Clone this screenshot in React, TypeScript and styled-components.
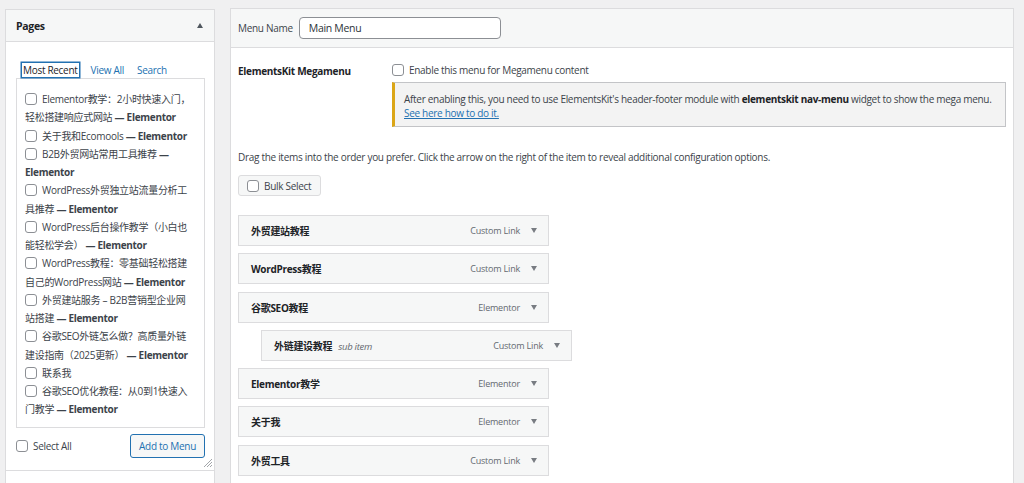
import * as React from 'react';
import styled, { createGlobalStyle } from 'styled-components';

type Page = { title: string; state?: string };
type MenuItem = { title: string; type: string; sub?: boolean };

const pages: Page[] = [
  { title: 'Elementor教学：2小时快速入门，轻松搭建响应式网站', state: 'Elementor' },
  { title: '关于我和Ecomools', state: 'Elementor' },
  { title: 'B2B外贸网站常用工具推荐', state: 'Elementor' },
  { title: 'WordPress外贸独立站流量分析工具推荐', state: 'Elementor' },
  { title: 'WordPress后台操作教学（小白也能轻松学会）', state: 'Elementor' },
  { title: 'WordPress教程：零基础轻松搭建自己的WordPress网站', state: 'Elementor' },
  { title: '外贸建站服务 – B2B营销型企业网站搭建', state: 'Elementor' },
  { title: '谷歌SEO外链怎么做？高质量外链建设指南（2025更新）', state: 'Elementor' },
  { title: '联系我' },
  { title: '谷歌SEO优化教程：从0到1快速入门教学', state: 'Elementor' },
];

const menuItems: MenuItem[] = [
  { title: '外贸建站教程', type: 'Custom Link' },
  { title: 'WordPress教程', type: 'Custom Link' },
  { title: '谷歌SEO教程', type: 'Elementor' },
  { title: '外链建设教程', type: 'Custom Link', sub: true },
  { title: 'Elementor教学', type: 'Elementor' },
  { title: '关于我', type: 'Elementor' },
  { title: '外贸工具', type: 'Custom Link' },
];

const GlobalStyle = createGlobalStyle`
  * { box-sizing: border-box; }
  html, body {
    margin: 0;
    padding: 0;
    background: #f0f0f1;
  }
  body {
    font-family: "Open Sans", "Noto Sans CJK SC", sans-serif;
    font-size: 10px;
    letter-spacing: -0.3px;
    color: #3c434a;
  }
`;

const Layout = styled.div`
  display: flex;
  align-items: flex-start;
  gap: 15px;
  height: 483px;
  overflow: hidden;
  padding: 8px 10px 0 5px;
`;

/* ---------- left column ---------- */

const SideColumn = styled.div`
  width: 210px;
  flex: none;
  margin-top: 1px;
  background: #fff;
  border: 1px solid #dcdcde;
  border-bottom: none;
`;

const SectionHeader = styled.div`
  display: flex;
  align-items: center;
  justify-content: space-between;
  height: 32px;
  padding: 0 11px 0 10px;
  background: #f6f7f7;
  border-bottom: 1px solid #dcdcde;
`;

const SectionTitle = styled.h3`
  margin: 0;
  font-size: 10.5px;
  font-weight: 700;
  color: #1d2327;
`;

const Caret = styled.span<{ $up?: boolean }>`
  width: 0;
  height: 0;
  border-left: 3px solid transparent;
  border-right: 3px solid transparent;
  ${p => (p.$up ? 'border-bottom: 5px solid #50575e;' : 'border-top: 5px solid #787c82;')}
`;

const SectionBody = styled.div`
  position: relative;
  padding: 20px 10px 12px 10px;
`;

const TabList = styled.div`
  display: flex;
  align-items: flex-end;
  gap: 9px;
  padding-left: 5px;
  height: 16px;
`;

const Tab = styled.span<{ $active?: boolean }>`
  display: block;
  padding: 0 1px;
  line-height: 14px;
  font-size: 10px;
  color: ${p => (p.$active ? '#1d2327' : '#2271b1')};
  border: 1px solid ${p => (p.$active ? '#2271b1' : 'transparent')};
  box-shadow: ${p => (p.$active ? '0 0 0 0.5px #2271b1' : 'none')};
  background: #fff;
`;

const TabPanel = styled.div`
  height: 350px;
  width: 189px;
  border: 1px solid #dcdcde;
  padding: 11px 9px 0 8px;
  overflow: hidden;
`;

const PageRow = styled.div`
  font-size: 10px;
  line-height: 18.25px;
  color: #3c434a;
`;

const Check = styled.span`
  display: inline-block;
  width: 12px;
  height: 12px;
  border: 1px solid #8c8f94;
  border-radius: 3px;
  background: #fff;
  vertical-align: -2px;
  margin-right: 5px;
  flex: none;
`;

const PostState = styled.strong`
  font-weight: 700;
  color: #3c434a;
`;

const SubmitRow = styled.div`
  display: flex;
  align-items: center;
  justify-content: space-between;
  margin-top: 6px;
  width: 189px;
`;

const CheckLabel = styled.label`
  display: flex;
  align-items: center;
  font-size: 10px;
  color: #3c434a;
`;

const SecondaryButton = styled.button`
  height: 24px;
  padding: 0 8px;
  font-family: inherit;
  font-size: 10px;
  letter-spacing: -0.3px;
  color: #2271b1;
  background: #f6f7f7;
  border: 1px solid #2271b1;
  border-radius: 3px;
`;

const ResizeGrip = styled.svg`
  position: absolute;
  right: 1px;
  bottom: 2px;
`;

const NextSection = styled.div`
  height: 20px;
  border-top: 1px solid #dcdcde;
`;

/* ---------- right column ---------- */

const EditorPanel = styled.div`
  flex: 1;
  min-width: 0;
  background: #fff;
  border: 1px solid #dcdcde;
  border-bottom: none;
  height: 480px;
`;

const EditorHeader = styled.div`
  display: flex;
  align-items: center;
  gap: 6px;
  height: 39px;
  padding: 0 7px;
  background: #f6f7f7;
  border-bottom: 1px solid #dcdcde;
`;

const FieldLabel = styled.label`
  font-size: 10px;
  color: #3c434a;
`;

const TextInput = styled.input`
  width: 202px;
  height: 22px;
  padding: 0 9px;
  font-family: inherit;
  font-size: 10.5px;
  letter-spacing: -0.3px;
  color: #2c3338;
  background: #fff;
  border: 1px solid #8c8f94;
  border-radius: 4px;
  outline: none;
`;

const EditorBody = styled.div`
  padding: 15px 7px 0 7px;
`;

const SettingRow = styled.div`
  display: grid;
  grid-template-columns: 154px 1fr;
`;

const SettingName = styled.div`
  font-size: 10px;
  font-weight: 700;
  color: #1d2327;
  line-height: 14px;
  padding-top: 1px;
`;

const SettingControl = styled.div`
  display: flex;
  flex-direction: column;
  gap: 5px;
`;

const Notice = styled.div`
  background: #f3f3f3;
  border: 1px solid #c3c4c7;
  border-left: 3px solid #dba617;
  padding: 9px 4px 6px 9px;
  font-size: 10px;
  line-height: 14px;
  color: #3c434a;

  strong {
    font-weight: 700;
    color: #1d2327;
  }

  a {
    color: #2271b1;
    text-decoration: underline;
  }
`;

const Instructions = styled.p`
  margin: 23px 0 0;
  font-size: 10px;
  line-height: 14px;
  color: #3c434a;
`;

const BulkButton = styled.div`
  display: inline-flex;
  align-items: center;
  height: 21px;
  margin-top: 11px;
  padding: 0 9px 0 8px;
  font-size: 10px;
  color: #3c434a;
  background: #f6f7f7;
  border: 1px solid #dcdcde;
  border-radius: 3px;
`;

const MenuList = styled.div`
  display: flex;
  flex-direction: column;
  gap: 7.3px;
  margin-top: 19px;
`;

const MenuRow = styled.div<{ $sub?: boolean }>`
  display: flex;
  align-items: center;
  justify-content: space-between;
  width: 311px;
  height: 31px;
  margin-left: ${p => (p.$sub ? '23px' : '0')};
  padding: 0 11px 0 12px;
  background: #f6f7f7;
  border: 1px solid #dcdcde;
`;

const MenuTitle = styled.span`
  font-size: 10px;
  font-weight: 700;
  color: #1d2327;
`;

const SubLabel = styled.em`
  margin-left: 6px;
  font-size: 9.5px;
  font-weight: 400;
  color: #646970;
`;

const MenuMeta = styled.span`
  display: flex;
  align-items: center;
  gap: 11px;
  font-size: 9px;
  letter-spacing: -0.2px;
  color: #646970;
`;

const App = () => {
  return (
    <>
      <GlobalStyle />
      <Layout>
        <SideColumn>
          <SectionHeader>
            <SectionTitle>Pages</SectionTitle>
            <Caret $up />
          </SectionHeader>
          <SectionBody>
            <TabList>
              <Tab $active>Most Recent</Tab>
              <Tab>View All</Tab>
              <Tab>Search</Tab>
            </TabList>
            <TabPanel>
              {pages.map(page => (
                <PageRow key={page.title}>
                  <Check />
                  {page.title}
                  {page.state && <PostState> — {page.state}</PostState>}
                </PageRow>
              ))}
            </TabPanel>
            <SubmitRow>
              <CheckLabel>
                <Check />
                Select All
              </CheckLabel>
              <SecondaryButton>Add to Menu</SecondaryButton>
            </SubmitRow>
            <ResizeGrip width="10" height="10" viewBox="0 0 10 10">
              <path d="M9 1 L1 9 M9 4 L4 9 M9 7 L7 9" stroke="#8c8f94" strokeWidth="0.8" />
            </ResizeGrip>
          </SectionBody>
          <NextSection />
        </SideColumn>

        <EditorPanel>
          <EditorHeader>
            <FieldLabel>Menu Name</FieldLabel>
            <TextInput defaultValue="Main Menu" />
          </EditorHeader>
          <EditorBody>
            <SettingRow>
              <SettingName>ElementsKit Megamenu</SettingName>
              <SettingControl>
                <CheckLabel>
                  <Check />
                  Enable this menu for Megamenu content
                </CheckLabel>
                <Notice>
                  After enabling this, you need to use ElementsKit's header-footer module with{' '}
                  <strong>elementskit nav-menu</strong> widget to show the mega menu.
                  <br />
                  <a href="#">See here how to do it.</a>
                </Notice>
              </SettingControl>
            </SettingRow>
            <Instructions>
              Drag the items into the order you prefer. Click the arrow on the right of the item to
              reveal additional configuration options.
            </Instructions>
            <BulkButton>
              <Check />
              Bulk Select
            </BulkButton>
            <MenuList>
              {menuItems.map(item => (
                <MenuRow key={item.title} $sub={item.sub}>
                  <MenuTitle>
                    {item.title}
                    {item.sub && <SubLabel>sub item</SubLabel>}
                  </MenuTitle>
                  <MenuMeta>
                    {item.type}
                    <Caret />
                  </MenuMeta>
                </MenuRow>
              ))}
            </MenuList>
          </EditorBody>
        </EditorPanel>
      </Layout>
    </>
  );
};

export default App;
